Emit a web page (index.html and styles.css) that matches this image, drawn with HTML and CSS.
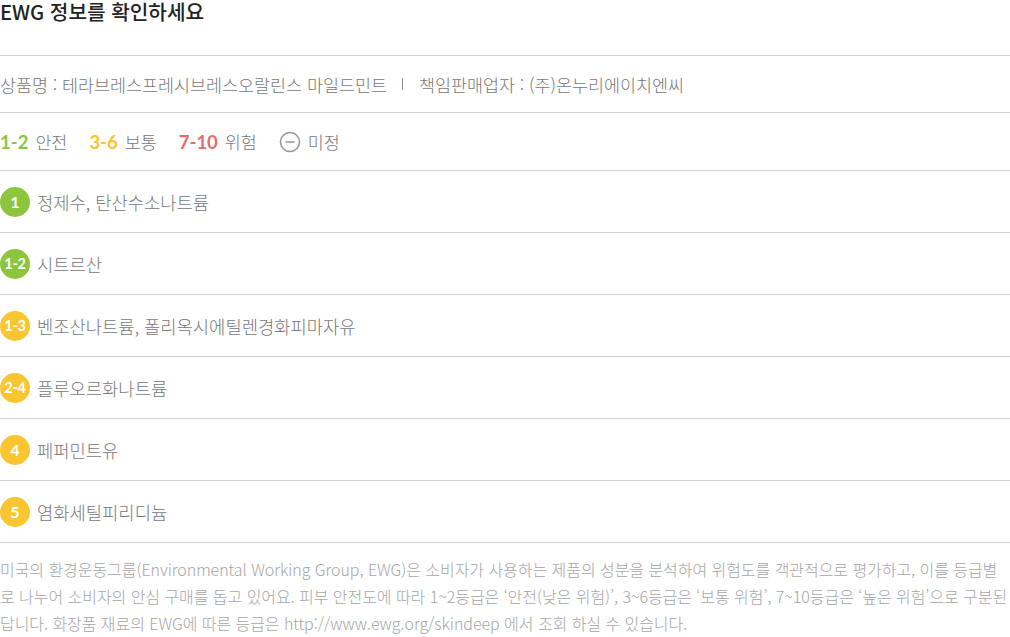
FILE: index.html
```html
<!DOCTYPE html>
<html lang="ko">
<head>
<meta charset="utf-8">
<link rel="stylesheet" href="styles.css">
</head>
<body>
<div class="page">
  <h1 class="title">EWG 정보를 확인하세요</h1>
  <div class="product">상품명 : 테라브레스프레시브레스오랄린스 마일드민트<span class="sep"></span>책임판매업자 : (주)온누리에이치엔씨</div>
  <div class="legend">
    <span class="lg"><b class="num green">1-2</b> 안전</span>
    <span class="lg"><b class="num yellow">3-6</b> 보통</span>
    <span class="lg"><b class="num red">7-10</b> 위험</span>
    <span class="lg"><svg class="minus" width="22" height="22" viewBox="0 0 22 22"><circle cx="11" cy="11" r="9.5" fill="none" stroke="#9a9a9a" stroke-width="1.6"/><line x1="6.5" y1="11" x2="15.5" y2="11" stroke="#9a9a9a" stroke-width="1.6"/></svg> 미정</span>
  </div>
  <ul class="list">
    <li class="row"><span class="badge green-bg">1</span><span class="name">정제수, 탄산수소나트륨</span></li>
    <li class="row"><span class="badge green-bg small">1-2</span><span class="name">시트르산</span></li>
    <li class="row"><span class="badge yellow-bg small">1-3</span><span class="name">벤조산나트륨, 폴리옥시에틸렌경화피마자유</span></li>
    <li class="row"><span class="badge yellow-bg small">2-4</span><span class="name">플루오르화나트륨</span></li>
    <li class="row"><span class="badge yellow-bg">4</span><span class="name">페퍼민트유</span></li>
    <li class="row"><span class="badge yellow-bg">5</span><span class="name">염화세틸피리디늄</span></li>
  </ul>
  <p class="desc">미국의 환경운동그룹(Environmental Working Group, EWG)은 소비자가 사용하는 제품의 성분을 분석하여 위험도를 객관적으로 평가하고, 이를 등급별로 나누어 소비자의 안심 구매를 돕고 있어요. 피부 안전도에 따라 1~2등급은 ‘안전(낮은 위험)’, 3~6등급은 ‘보통 위험’, 7~10등급은 ‘높은 위험’으로 구분된답니다. 화장품 재료의 EWG에 따른 등급은 http://www.ewg.org/skindeep 에서 조회 하실 수 있습니다.</p>
</div>
</body>
</html>
```
FILE: styles.css
```css
* { box-sizing: border-box; }
html, body { margin: 0; padding: 0; background: #fff; }
body {
  font-family: "Noto Sans CJK KR", "Noto Sans", sans-serif;
  color: #7a7a7a;
}
.page { width: 1010px; }
.title {
  margin: 0;
  height: 56px;
  padding-top: 1px;
  font-size: 20.2px;
  line-height: 22px;
  font-weight: 500;
  color: #222;
  border-bottom: 1px solid #cfcfcf;
}
.product {
  height: 57px;
  display: flex;
  align-items: center;
  font-size: 17.4px;
  font-weight: 300;
  color: #777;
  border-bottom: 1px solid #cfcfcf;
}
.sep {
  width: 1px;
  height: 12px;
  background: #888;
  margin: 0 16px 0 15px;
}
.legend {
  height: 58px;
  display: flex;
  align-items: center;
  gap: 22px;
  font-size: 17.4px;
  font-weight: 300;
  color: #777;
  border-bottom: 1px solid #cfcfcf;
}
.lg { display: flex; align-items: center; gap: 7px; }
.num { font-family: "Lato", "Noto Sans", sans-serif; font-weight: 700; font-size: 18.5px; }
.green { color: #8cc63f; }
.yellow { color: #f7c431; }
.red { color: #e96b6c; }
.minus { display: block; }
.list { list-style: none; margin: 0; padding: 0; }
.row {
  height: 62px;
  display: flex;
  align-items: center;
  gap: 7px;
  border-bottom: 1px solid #cfcfcf;
}
.badge {
  width: 30px;
  height: 30px;
  border-radius: 50%;
  display: flex;
  align-items: center;
  justify-content: center;
  color: #fff;
  font-family: "Lato", "Noto Sans", sans-serif;
  font-weight: 700;
  font-size: 16px;
}
.badge.small { font-size: 14.5px; letter-spacing: -0.3px; }
.green-bg { background: #8cc63f; }
.yellow-bg { background: #f9c631; }
.name { font-size: 17.7px; font-weight: 300; color: #777; }
.desc {
  margin: 0;
  padding-top: 13px;
  font-size: 16px;
  line-height: 27px;
  font-weight: 300;
  color: #a5a5a5;
  letter-spacing: -0.05px;
}
```
